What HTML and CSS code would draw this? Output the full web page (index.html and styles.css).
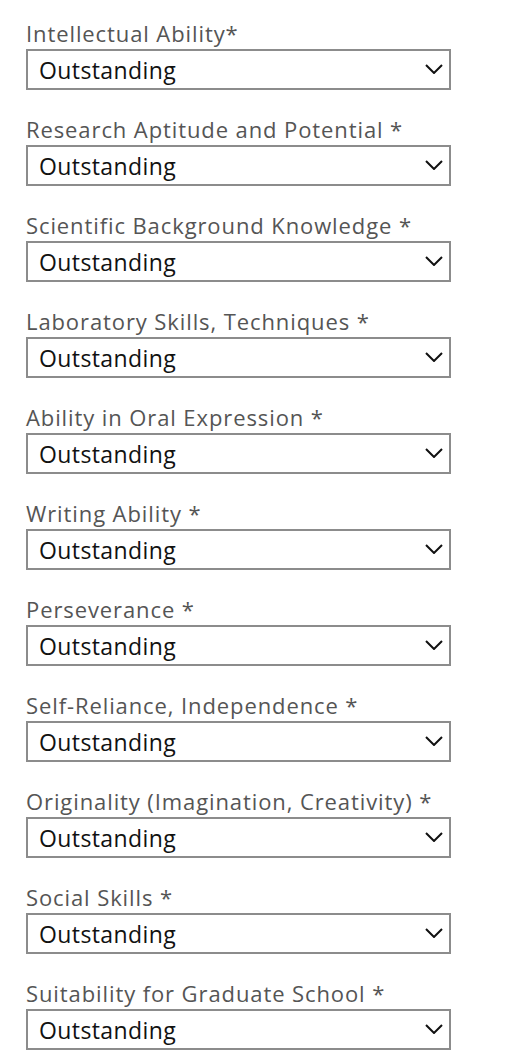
FILE: index.html
```html
<!DOCTYPE html>
<html lang="en">
<head>
<meta charset="utf-8">
<title>Evaluation</title>
<link rel="stylesheet" href="styles.css">
</head>
<body>
<form class="form">
  <div class="field">
    <label class="label">Intellectual Ability*</label>
    <div class="select"><span class="value">Outstanding</span><svg class="chev" width="18" height="10" viewBox="0 0 18 10"><path d="M1 1 L9 9 L17 1" fill="none" stroke="#111" stroke-width="2"/></svg></div>
  </div>
  <div class="field">
    <label class="label">Research Aptitude and Potential *</label>
    <div class="select"><span class="value">Outstanding</span><svg class="chev" width="18" height="10" viewBox="0 0 18 10"><path d="M1 1 L9 9 L17 1" fill="none" stroke="#111" stroke-width="2"/></svg></div>
  </div>
  <div class="field">
    <label class="label">Scientific Background Knowledge *</label>
    <div class="select"><span class="value">Outstanding</span><svg class="chev" width="18" height="10" viewBox="0 0 18 10"><path d="M1 1 L9 9 L17 1" fill="none" stroke="#111" stroke-width="2"/></svg></div>
  </div>
  <div class="field">
    <label class="label">Laboratory Skills, Techniques *</label>
    <div class="select"><span class="value">Outstanding</span><svg class="chev" width="18" height="10" viewBox="0 0 18 10"><path d="M1 1 L9 9 L17 1" fill="none" stroke="#111" stroke-width="2"/></svg></div>
  </div>
  <div class="field">
    <label class="label">Ability in Oral Expression *</label>
    <div class="select"><span class="value">Outstanding</span><svg class="chev" width="18" height="10" viewBox="0 0 18 10"><path d="M1 1 L9 9 L17 1" fill="none" stroke="#111" stroke-width="2"/></svg></div>
  </div>
  <div class="field">
    <label class="label">Writing Ability *</label>
    <div class="select"><span class="value">Outstanding</span><svg class="chev" width="18" height="10" viewBox="0 0 18 10"><path d="M1 1 L9 9 L17 1" fill="none" stroke="#111" stroke-width="2"/></svg></div>
  </div>
  <div class="field">
    <label class="label">Perseverance *</label>
    <div class="select"><span class="value">Outstanding</span><svg class="chev" width="18" height="10" viewBox="0 0 18 10"><path d="M1 1 L9 9 L17 1" fill="none" stroke="#111" stroke-width="2"/></svg></div>
  </div>
  <div class="field">
    <label class="label">Self-Reliance, Independence *</label>
    <div class="select"><span class="value">Outstanding</span><svg class="chev" width="18" height="10" viewBox="0 0 18 10"><path d="M1 1 L9 9 L17 1" fill="none" stroke="#111" stroke-width="2"/></svg></div>
  </div>
  <div class="field">
    <label class="label">Originality (Imagination, Creativity) *</label>
    <div class="select"><span class="value">Outstanding</span><svg class="chev" width="18" height="10" viewBox="0 0 18 10"><path d="M1 1 L9 9 L17 1" fill="none" stroke="#111" stroke-width="2"/></svg></div>
  </div>
  <div class="field">
    <label class="label">Social Skills *</label>
    <div class="select"><span class="value">Outstanding</span><svg class="chev" width="18" height="10" viewBox="0 0 18 10"><path d="M1 1 L9 9 L17 1" fill="none" stroke="#111" stroke-width="2"/></svg></div>
  </div>
  <div class="field">
    <label class="label">Suitability for Graduate School *</label>
    <div class="select"><span class="value">Outstanding</span><svg class="chev" width="18" height="10" viewBox="0 0 18 10"><path d="M1 1 L9 9 L17 1" fill="none" stroke="#111" stroke-width="2"/></svg></div>
  </div>
</form>
</body>
</html>
```
FILE: styles.css
```css
html, body {
  margin: 0;
  padding: 0;
  background: #fff;
}
body {
  font-family: "Open Sans", "Lato", sans-serif;
  padding: 22px 0 0 26px;
}
.form {
  display: flex;
  flex-direction: column;
  gap: 28px;
}
.field {
  display: flex;
  flex-direction: column;
  width: 425px;
}
.label {
  display: block;
  height: 27px;
  font-size: 22px;
  line-height: 22px;
  letter-spacing: 0.9px;
  color: #555;
  white-space: nowrap;
}
.select {
  box-sizing: border-box;
  height: 41px;
  border: 2px solid #8c8c8c;
  display: flex;
  align-items: center;
  justify-content: space-between;
  padding: 0 6px 0 11px;
  background: #fff;
}
.value {
  font-size: 23px;
  letter-spacing: 0.4px;
  color: #111;
}
.chev {
  display: block;
  margin-top: -2px;
}
```
